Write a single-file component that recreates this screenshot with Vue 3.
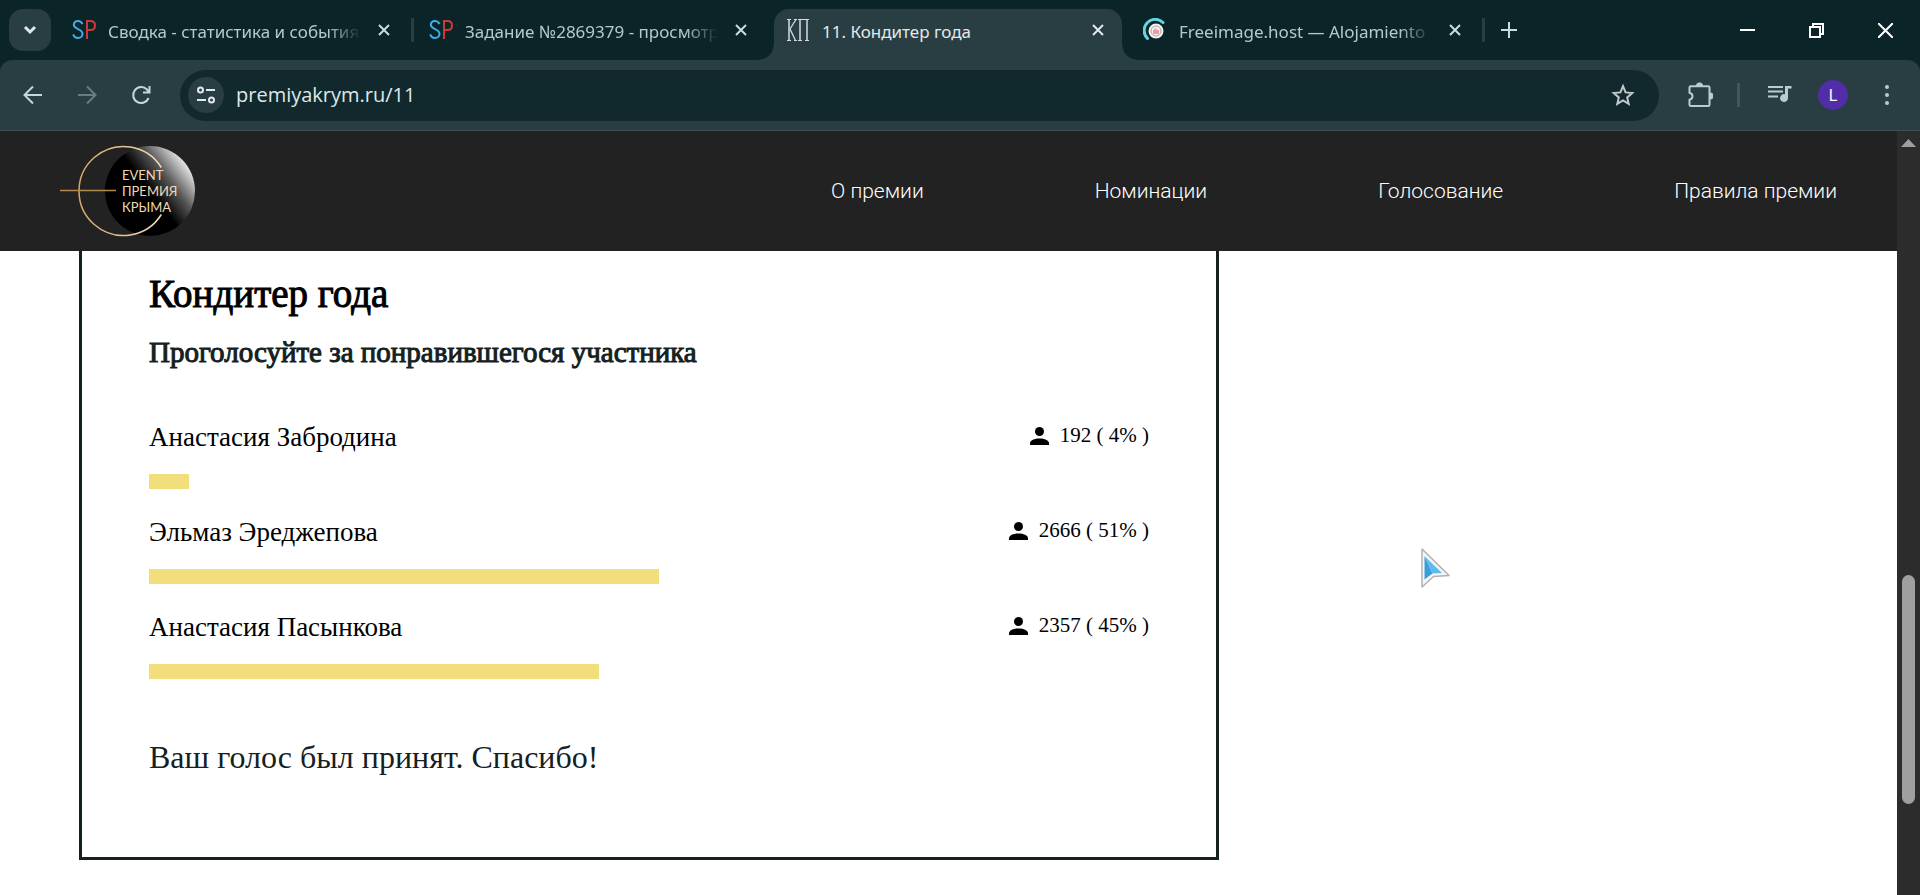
<template>
  <div class="browser">
    <!-- Полоса вкладок -->
    <header class="tabStrip">
      <button class="tabSearch" type="button" aria-label="Поиск вкладок">
        <svg width="14" height="10" viewBox="0 0 14 10"><path d="M2 2l5 5 5-5" /></svg>
      </button>
      <div class="tabs">
        <div v-for="tab in tabs" :key="tab.id" :class="['tab', { activeTab: tab.id === activeId }]">
          <svg v-if="tab.icon === 'sp'" class="favicon" width="24" height="24" viewBox="0 0 24 24">
            <path d="M10.500 6C9.500 4 8 3 6 3 3.500 3 1.800 4.600 1.800 6.800c0 5 8.700 3.600 8.700 9 0 2.600-2 4.200-4.500 4.200-2.200 0-4-1.200-4.800-3.600" fill="none" stroke="#3daee9" stroke-width="2" />
            <path d="M15 21V3h3.500c3 0 4.500 1.800 4.500 4.500S21.500 12 18.500 12H15" fill="none" stroke="#c93a38" stroke-width="2" />
          </svg>
          <svg v-else-if="tab.icon === 'kp'" class="favicon" width="24" height="24" viewBox="0 0 24 24">
            <path d="M1 1.500h4M1 22.500h4M8 1.500h3M8 22.500h3M12 1.500h11M12 22.500h4M19 22.500h4" stroke="#d5dcdd" fill="none" />
            <path d="M3 1.500v21M14 1.500v21M21 1.500v21" stroke="#d5dcdd" stroke-width="1.500" fill="none" />
            <path d="M10 1.500L4 11l5.500 11.500" stroke="#d5dcdd" stroke-width="1.300" fill="none" />
          </svg>
          <svg v-else class="favicon" width="24" height="24" viewBox="0 0 24 24">
            <circle cx="13" cy="13" r="7.500" fill="#f4f0f0" />
            <circle cx="13" cy="13" r="5" fill="none" stroke="#a9a4a5" />
            <path d="M10 16v-4h1.500v-1.500h2V12H16v4z" fill="#ef9a96" />
            <path d="M4.500 20.500A11 11 0 0 1 20 4.500" fill="none" stroke="#66d3e4" stroke-width="3" stroke-linecap="round" />
          </svg>
          <span :class="['tabTitle', { fadeTitle: tab.fade }]">{{ tab.title }}</span>
          <button class="closeBtn" type="button" aria-label="Закрыть вкладку" @click="closeTab(tab)">
            <svg width="14" height="14" viewBox="0 0 14 14"><path d="M2 2l10 10M12 2L2 12" /></svg>
          </button>
        </div>
      </div>
      <button class="newTab" type="button" aria-label="Новая вкладка">
        <svg width="16" height="16" viewBox="0 0 16 16"><path d="M8 0v16M0 8h16" /></svg>
      </button>
      <div class="windowBtns">
        <button type="button" aria-label="Свернуть">
          <svg width="15" height="15" viewBox="0 0 15 15"><path d="M0 7h15" /></svg>
        </button>
        <button type="button" aria-label="Развернуть">
          <svg width="15" height="15" viewBox="0 0 15 15"><path d="M1 4h10v10H1zM4 4V1h10v10h-3" /></svg>
        </button>
        <button type="button" aria-label="Закрыть">
          <svg width="15" height="15" viewBox="0 0 15 15"><path d="M0 0l15 15M15 0L0 15" /></svg>
        </button>
      </div>
    </header>

    <!-- Панель с адресом -->
    <div class="toolbarBack">
      <div class="toolbar">
        <button class="navBtn" type="button" aria-label="Назад">
          <svg width="20" height="20" viewBox="0 0 20 20"><path d="M19 10H2M10 1.500L1.500 10l8.500 8.500" /></svg>
        </button>
        <button class="navBtn dimBtn" type="button" aria-label="Вперёд">
          <svg width="20" height="20" viewBox="0 0 20 20"><path d="M1 10h17M10 1.500l8.500 8.500-8.500 8.500" /></svg>
        </button>
        <button class="navBtn" type="button" aria-label="Обновить">
          <svg width="20" height="20" viewBox="0 0 20 20"><path d="M17.600 13A8 8 0 1 1 16 4.500l2 2.300M18.500 1v6.500H12" /></svg>
        </button>
        <div class="addressBar">
          <button class="siteBtn" type="button" aria-label="Сведения о сайте">
            <svg width="20" height="20" viewBox="0 0 20 20">
              <circle cx="4.500" cy="5" r="2.500" /><path d="M10 5h9M1 15h9" /><circle cx="15.500" cy="15" r="2.500" />
            </svg>
          </button>
          <input v-model="address" class="addressInput" type="text" aria-label="Адрес" spellcheck="false" />
          <button class="starBtn" type="button" aria-label="Добавить в закладки">
            <svg width="24" height="24" viewBox="0 0 24 24">
              <path d="M12 3.200l2.600 6.200 6.700.6-5.100 4.400 1.500 6.500-5.700-3.400-5.700 3.400 1.500-6.500L2.700 10l6.700-.6z" />
            </svg>
          </button>
        </div>
        <div class="toolIcons">
          <button type="button" aria-label="Расширения">
            <svg width="26" height="26" viewBox="0 0 26 26">
              <path d="M2.500 5.500c0-.800.500-1.300 1.300-1.300h17.400c.800 0 1.300.500 1.300 1.300v17.200c0 .800-.500 1.300-1.300 1.300H3.800c-.800 0-1.300-.500-1.300-1.300v-5c4-1 4-6 0-7z" fill="none" stroke="#b7cdd1" stroke-width="2" />
              <path d="M9 4a3.500 3.500 0 0 1 7 0zM23 10.500a3.500 3.500 0 0 1 0 7z" fill="#b7cdd1" />
            </svg>
          </button>
          <span class="toolDivider"></span>
          <button type="button" aria-label="Управление медиа">
            <svg width="24" height="24" viewBox="0 0 24 24">
              <path d="M0 4h15M0 8.500h15M0 13.500h10" stroke="#b7cdd1" stroke-width="2" />
              <path d="M17 3h6.500v2.500H20V15a4 4 0 1 1-3-3.800z" fill="#b7cdd1" />
            </svg>
          </button>
          <button class="avatar" type="button">L</button>
          <button type="button" aria-label="Меню">
            <svg width="24" height="24" viewBox="0 0 24 24" fill="#b7cdd1">
              <circle cx="12" cy="4" r="2" /><circle cx="12" cy="12" r="2" /><circle cx="12" cy="20" r="2" />
            </svg>
          </button>
        </div>
      </div>
    </div>

    <!-- Содержимое сайта -->
    <div class="viewport">
      <div class="site">
        <div class="siteHeader">
          <a class="logo" href="#" aria-label="Event премия Крыма">
            <svg width="136" height="92" viewBox="0 0 136 92">
              <defs>
                <linearGradient id="sphere" x1="0.500" y1="0.500" x2="0.920" y2="0.180">
                  <stop offset="0" stop-color="#000" />
                  <stop offset="0.450" stop-color="#555" />
                  <stop offset="1" stop-color="#f4f4f4" />
                </linearGradient>
                <linearGradient id="gold" x1="0" y1="0" x2="1" y2="0">
                  <stop offset="0" stop-color="#d9a868" />
                  <stop offset="1" stop-color="#f3dfbd" />
                </linearGradient>
              </defs>
              <circle cx="90" cy="46" r="45" fill="url(#sphere)" />
              <path d="M101.300 22.500A44.500 44.500 0 1 0 101.300 69.500" fill="none" stroke="url(#gold)" stroke-width="1.500" />
              <path d="M0 45.500h56" stroke="#b58a4e" stroke-width="1.500" />
              <g class="logoText">
                <text x="62" y="35">EVENT</text>
                <text x="62" y="51">ПРЕМИЯ</text>
                <text x="62" y="67">КРЫМА</text>
              </g>
            </svg>
          </a>
          <nav class="menu">
            <a v-for="item in menu" :key="item" href="#">{{ item }}</a>
          </nav>
        </div>

        <main class="pollCard">
          <h1>Кондитер года</h1>
          <h2>Проголосуйте за понравившегося участника</h2>
          <ul class="results">
            <li v-for="person in persons" :key="person.name">
              <div class="resultRow">
                <span class="personName">{{ person.name }}</span>
                <span class="personVotes">
                  <svg width="19" height="18" viewBox="0 0 19 18">
                    <circle cx="9.500" cy="4.500" r="4.500" />
                    <path d="M0 18v-1.500C0 13.200 4.500 11.500 9.500 11.500S19 13.200 19 16.500V18z" />
                  </svg>
                  <span>{{ person.votes }} ( {{ getPercent(person) }}% )</span>
                </span>
              </div>
              <div class="bar" :style="{ width: getPercent(person) + '%' }"></div>
            </li>
          </ul>
          <p class="thanks">Ваш голос был принят. Спасибо!</p>
        </main>
      </div>

      <div class="scrollbar">
        <svg class="scrollArrow" width="15" height="8" viewBox="0 0 15 8"><path d="M7.500 0L15 8H0z" /></svg>
        <div class="scrollTrack">
          <div class="scrollBefore"></div>
          <div class="scrollThumb"></div>
          <div class="scrollAfter"></div>
        </div>
      </div>
    </div>

    <svg class="pointer" width="32" height="42" viewBox="0 0 32 42">
      <path d="M2 2l27 26.500-15.500 1L2 40z" fill="#f6f6f6" stroke="#b5b0b0" stroke-width="1.500" stroke-linejoin="round" />
      <path d="M4.500 9l8 17.500-8 6z" fill="#3a9fd8" />
      <path d="M4.500 9l17.500 17-9.500.5z" fill="#5cbcf0" />
    </svg>
  </div>
</template>

<script setup>
import { ref, computed } from 'vue'

const address = ref('premiyakrym.ru/11')
const activeId = ref(3)

const tabs = ref([
  { id: 1, icon: 'sp', title: 'Сводка - статистика и события', fade: true },
  { id: 2, icon: 'sp', title: 'Задание №2869379 - просмотр', fade: true },
  { id: 3, icon: 'kp', title: '11. Кондитер года', fade: false },
  { id: 4, icon: 'host', title: 'Freeimage.host — Alojamiento', fade: true }
])

const menu = ['О премии', 'Номинации', 'Голосование', 'Правила премии']

const persons = ref([
  { name: 'Анастасия Забродина', votes: 192 },
  { name: 'Эльмаз Эреджепова', votes: 2666 },
  { name: 'Анастасия Пасынкова', votes: 2357 }
])

const totalVotes = computed(() => { // сумма всех голосов
  let total = 0
  for (let i = 0; i < persons.value.length; i++) {
    total += persons.value[i].votes
  }
  return total
})

const getPercent = (person) => Math.round(person.votes / totalVotes.value * 100)

const closeTab = (tab) => {
  tabs.value = tabs.value.filter(t => t.id !== tab.id)
}
</script>

<style>
body {
  margin: 0;
  background: #fff;
}
</style>

<style scoped>
.browser {
  height: 100vh;
  display: flex;
  flex-direction: column;
  overflow: hidden;
  position: relative;
  font-family: "Noto Sans", "Open Sans", sans-serif;
}

button {
  padding: 0;
  border: none;
  background: none;
  display: flex;
  align-items: center;
  justify-content: center;
  flex-shrink: 0;
  cursor: pointer;
}

a {
  text-decoration: none;
}

/* Вкладки */
.tabStrip {
  height: 60px;
  flex-shrink: 0;
  display: flex;
  background: #0b2428;
}

.tabSearch {
  width: 42px;
  height: 42px;
  margin: 9px;
  border-radius: 14px;
  background: #283e42;
}

.tabSearch path {
  fill: none;
  stroke: #e3e9ea;
  stroke-width: 3;
}

.tabs {
  display: flex;
  gap: 9px;
  padding-top: 9px;
}

.tab {
  width: 348px;
  box-sizing: border-box;
  padding: 0 12px;
  display: flex;
  align-items: flex-start;
  position: relative;
  color: #b3cacd;
}

.tab::after {
  content: '';
  position: absolute;
  top: 9px;
  right: -6px;
  width: 3px;
  height: 24px;
  border-radius: 1px;
  background: #283e42;
}

.activeTab {
  background: #283e42;
  border-radius: 15px 15px 0 0;
  color: #e3e9ea;
}

/* скругления у основания активной вкладки */
.activeTab::before,
.activeTab::after {
  content: '';
  position: absolute;
  top: auto;
  bottom: 0;
  width: 15px;
  height: 15px;
  border-radius: 0;
}

.activeTab::before {
  left: -15px;
  background: radial-gradient(circle at 0 0, #0b2428 14px, #283e42 15px);
}

.activeTab::after {
  right: -15px;
  background: radial-gradient(circle at 100% 0, #0b2428 14px, #283e42 15px);
}

.tab:has(+ .activeTab)::after {
  display: none;
}

.favicon {
  margin-top: 9px;
  flex-shrink: 0;
}

.tabTitle {
  flex: 1;
  min-width: 0;
  margin-left: 12px;
  margin-top: 10px;
  line-height: 26px;
  font-size: 17px;
  white-space: nowrap;
  overflow: hidden;
}

.fadeTitle {
  mask-image: linear-gradient(90deg, #000 220px, transparent 253px);
}

.closeBtn {
  width: 24px;
  height: 24px;
  margin-top: 9px;
  flex-shrink: 0;
}

.closeBtn path {
  stroke: #c9dcdf;
  stroke-width: 2;
}

.activeTab .closeBtn path {
  stroke: #e3e9ea;
}

.newTab {
  width: 42px;
  height: 42px;
  margin: 9px 0 0 9px;
}

.newTab path {
  stroke: #c9dcdf;
  stroke-width: 2;
}

.windowBtns {
  display: flex;
  margin-left: auto;
}

.windowBtns button {
  width: 69px;
}

.windowBtns path {
  fill: none;
  stroke: #fff;
  stroke-width: 2;
}

/* Панель инструментов */
.toolbarBack {
  flex-shrink: 0;
  background: #0b2428;
}

.toolbar {
  height: 71px;
  box-sizing: border-box;
  display: flex;
  align-items: center;
  padding: 0 21px 0 6px;
  border-bottom: 1px solid #3d5155;
  border-radius: 12px 12px 0 0;
  background: #283e42;
}

.navBtn {
  width: 54px;
  height: 48px;
}

.navBtn path {
  fill: none;
  stroke: #c3d8db;
  stroke-width: 2;
}

.dimBtn path {
  stroke: #6a7c80;
}

.addressBar {
  flex: 1;
  height: 51px;
  margin-left: 12px;
  box-sizing: border-box;
  padding: 0 24px 0 8px;
  display: flex;
  align-items: center;
  border-radius: 26px;
  background: #11292d;
}

.siteBtn {
  width: 36px;
  height: 36px;
  border-radius: 50%;
  background: #283e42;
}

.siteBtn path,
.siteBtn circle {
  fill: none;
  stroke: #e3e9ea;
  stroke-width: 2;
}

.addressInput {
  flex: 1;
  min-width: 0;
  margin-left: 12px;
  padding: 0;
  border: none;
  outline: none;
  background: none;
  color: #dfe8e8;
  font-family: "Open Sans", sans-serif;
  font-size: 20px;
  line-height: 28px;
}

.starBtn path {
  fill: none;
  stroke: #c3c9ca;
  stroke-width: 2;
}

.toolIcons {
  display: flex;
  align-items: center;
  margin-left: 28px;
}

.toolDivider {
  width: 3px;
  height: 24px;
  margin: 0 28px 0 24px;
  background: #42575b;
}

.avatar {
  width: 30px;
  height: 30px;
  margin: 0 27px 0 26px;
  border-radius: 50%;
  background: #512da8;
  color: #fff;
  font-family: Roboto, sans-serif;
  font-size: 16px;
}

/* Сайт */
.viewport {
  flex: 1;
  min-height: 0;
  display: flex;
}

.site {
  flex: 1;
  min-width: 0;
  overflow: hidden;
  background: #fff;
}

.siteHeader {
  height: 120px;
  display: flex;
  align-items: center;
  justify-content: space-between;
  padding: 0 60px;
  background: #222;
}

.logo {
  display: flex;
}

.logoText {
  fill: #efd9b4;
  font-family: Lato, sans-serif;
  font-size: 13px;
}

.menu {
  display: flex;
  gap: 171px;
}

.menu a {
  color: #fff;
  font-family: Roboto, sans-serif;
  font-size: 21px;
  font-weight: 300;
  line-height: 28px;
}

.pollCard {
  max-width: 1140px;
  box-sizing: border-box;
  margin: 0 79px;
  padding: 19px 67px 78px;
  border: 3px solid #14211f;
  border-top: none;
  color: #000;
  font-family: "Liberation Serif", serif;
}

h1,
h2 {
  margin: 0;
  font-weight: 400;
  -webkit-text-stroke: 1px currentColor;
}

h1 {
  font-size: 39px;
  line-height: 48px;
}

h2 {
  margin-top: 14px;
  color: #14211f;
  font-size: 29px;
  line-height: 40px;
}

.results {
  list-style: none;
  margin: 49px 0 0;
  padding: 0;
  display: flex;
  flex-direction: column;
  gap: 27px;
}

.resultRow {
  display: flex;
  align-items: flex-start;
  justify-content: space-between;
  line-height: 32px;
}

.personName {
  font-size: 27px;
}

.personVotes {
  display: flex;
  align-items: center;
  gap: 11px;
  font-size: 21px;
  line-height: 29px;
}

.bar {
  height: 15px;
  margin-top: 21px;
  background: #f2de7c;
}

.thanks {
  margin: 56px 0 0;
  color: #14211f;
  font-size: 32px;
  line-height: 44px;
}

/* Полоса прокрутки */
.scrollbar {
  width: 23px;
  display: flex;
  flex-direction: column;
  align-items: center;
  background: #2c2c2c;
}

.scrollArrow {
  margin: 8px 0;
  flex-shrink: 0;
  fill: #9f9f9f;
}

.scrollTrack {
  flex: 1;
  width: 13px;
  display: flex;
  flex-direction: column;
}

.scrollBefore {
  flex: 420;
}

.scrollThumb {
  flex: 229;
  border-radius: 7px;
  background: #9f9f9f;
}

.scrollAfter {
  flex: 91;
}

/* Указатель поверх страницы */
.pointer {
  position: absolute;
  left: 1420px;
  top: 547px;
  pointer-events: none;
}
</style>
